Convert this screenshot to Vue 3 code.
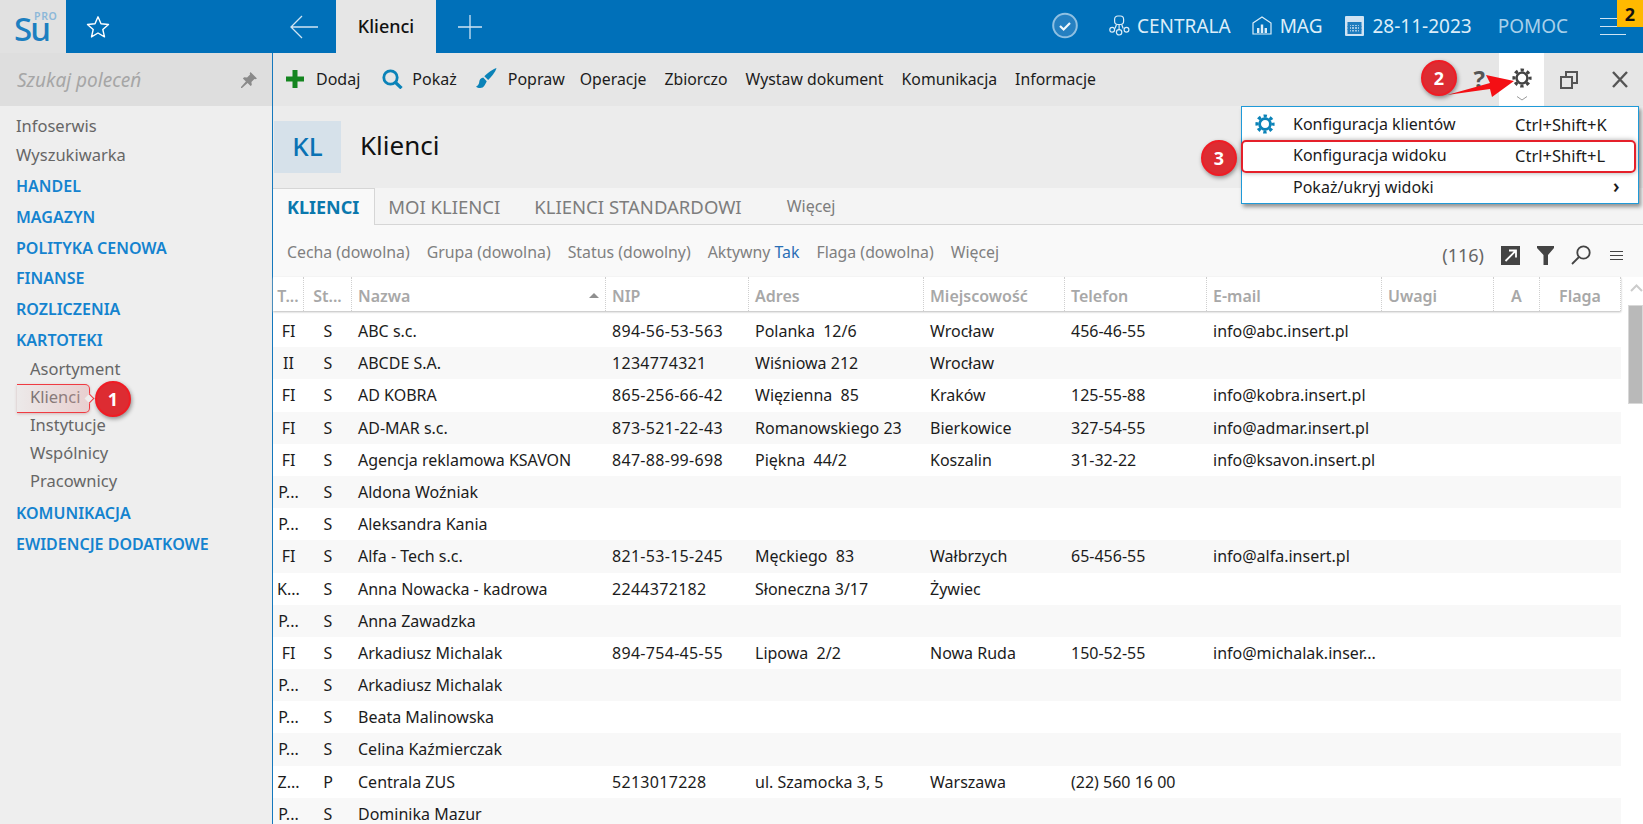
<script setup>
const navTop = ['Infoserwis', 'Wyszukiwarka']
const navA = ['HANDEL', 'MAGAZYN', 'POLITYKA CENOWA', 'FINANSE', 'ROZLICZENIA', 'KARTOTEKI']
const navSub = ['Asortyment', 'Klienci', 'Instytucje', 'Wspólnicy', 'Pracownicy']
const navB = ['KOMUNIKACJA', 'EWIDENCJE DODATKOWE']
const tools = ['Operacje', 'Zbiorczo', 'Wystaw dokument', 'Komunikacja', 'Informacje']
const headers = [
  ['T...', 'c'], ['St...', 'c'], ['Nazwa', 's'], ['NIP', ''], ['Adres', ''], ['Miejscowość', ''],
  ['Telefon', ''], ['E-mail', ''], ['Uwagi', ''], ['A', 'c'], ['Flaga', 'c']
]
const rows = [
  ['FI', 'S', 'ABC s.c.', '894-56-53-563', 'Polanka  12/6', 'Wrocław', '456-46-55', 'info@abc.insert.pl'],
  ['II', 'S', 'ABCDE S.A.', '1234774321', 'Wiśniowa 212', 'Wrocław', '', ''],
  ['FI', 'S', 'AD KOBRA', '865-256-66-42', 'Więzienna  85', 'Kraków', '125-55-88', 'info@kobra.insert.pl'],
  ['FI', 'S', 'AD-MAR s.c.', '873-521-22-43', 'Romanowskiego 23', 'Bierkowice', '327-54-55', 'info@admar.insert.pl'],
  ['FI', 'S', 'Agencja reklamowa KSAVON', '847-88-99-698', 'Piękna  44/2', 'Koszalin', '31-32-22', 'info@ksavon.insert.pl'],
  ['P...', 'S', 'Aldona Woźniak', '', '', '', '', ''],
  ['P...', 'S', 'Aleksandra Kania', '', '', '', '', ''],
  ['FI', 'S', 'Alfa - Tech s.c.', '821-53-15-245', 'Męckiego  83', 'Wałbrzych', '65-456-55', 'info@alfa.insert.pl'],
  ['K...', 'S', 'Anna Nowacka - kadrowa', '2244372182', 'Słoneczna 3/17', 'Żywiec', '', ''],
  ['P...', 'S', 'Anna Zawadzka', '', '', '', '', ''],
  ['FI', 'S', 'Arkadiusz Michalak', '894-754-45-55', 'Lipowa  2/2', 'Nowa Ruda', '150-52-55', 'info@michalak.inser...'],
  ['P...', 'S', 'Arkadiusz Michalak', '', '', '', '', ''],
  ['P...', 'S', 'Beata Malinowska', '', '', '', '', ''],
  ['P...', 'S', 'Celina Kaźmierczak', '', '', '', '', ''],
  ['Z...', 'P', 'Centrala ZUS', '5213017228', 'ul. Szamocka 3, 5', 'Warszawa', '(22) 560 16 00', ''],
  ['P...', 'S', 'Dominika Mazur', '', '', '', '', '']
]
</script>

<template>
  <div class="app">
    <header class="top">
      <div class="logo"><span class="su">Su</span><span class="pro">PRO</span></div>
      <svg class="star" width="24" height="24" viewBox="0 0 24 24"><path d="M12 1.800l3 7 7.500.7-5.700 5 1.700 7.400L12 18l-6.500 3.900 1.700-7.400-5.700-5 7.500-.7z" fill="none" stroke="#fff" stroke-width="1.400" stroke-linejoin="round"/></svg>
      <svg class="back" width="30" height="24" viewBox="0 0 30 24"><path d="M29 12H2M13 1L2 12l11 11" fill="none" stroke="#cfe4f3" stroke-width="1.300"/></svg>
      <div class="tab">Klienci</div>
      <svg class="plus" width="24" height="24" viewBox="0 0 24 24"><path d="M12 0v24M0 12h24" stroke="#cfe4f3" stroke-width="1.300"/></svg>
      <div class="status">
        <svg class="st-check" width="26" height="27" viewBox="0 0 26 27"><circle cx="13" cy="13.500" r="11.800" fill="#2580c1" stroke="#8fc0e2" stroke-width="2"/><path d="M8 14l3.600 3.500L18 11" fill="none" stroke="#f2f8fc" stroke-width="2.200"/></svg>
        <svg class="st-net" width="21" height="21" viewBox="0 0 21 21" fill="none" stroke="#dcedf8" stroke-width="1.200"><rect x="5.600" y="1" width="9" height="8.500" rx="3.200"/><path d="M10.100 9.500v5.400M7.500 9.500L6 13.500M12.700 9.500l1.500 4"/><circle cx="3.200" cy="14.800" r="2.400"/><circle cx="10.100" cy="17.300" r="2.700"/><circle cx="17.500" cy="14.800" r="2.400"/></svg>
        <span class="st-text cen">CENTRALA</span>
        <svg class="st-home" width="20" height="19" viewBox="0 0 20 19" fill="none" stroke="#dcedf8" stroke-width="1.200"><path d="M1 7l9-6 9 6v11H1z"/><path d="M5 12h2.400v5H5zM8.800 8.500h2.400V17H8.800zM12.600 12H15v5h-2.400z" fill="#dcedf8" stroke="none"/></svg>
        <span class="st-text mag">MAG</span>
        <svg class="st-cal" width="19" height="20" viewBox="0 0 19 20"><rect width="19" height="20" rx="1" fill="#cfe3f3"/><rect x="2.500" y="6" width="14" height="12" fill="#1f7dbf"/><path d="M5 9h9v6.500H5z" fill="#9cc6e4"/><path d="M2.500 10.500h14M2.500 13.500h14M6.500 6v12M9.500 6v12M12.500 6v12" stroke="#1f7dbf"/></svg>
        <span class="st-text date">28-11-2023</span>
        <span class="st-text help">POMOC</span>
      </div>
      <div class="burger"><i></i><i></i><i></i></div>
    </header>

    <div class="body">
      <aside class="side">
        <div class="search">
          <span>Szukaj poleceń</span>
          <svg width="18" height="18" viewBox="0 0 18 18"><path d="M10.500 1l6.500 6.500-1.600.8-1-.4-3 3 .4 3-1.200 1.200-3-3L2 17H1v-1l4.900-5.600-3-3 1.200-1.200 3 .4 3-3-.4-1z" fill="#8a8a8a"/></svg>
        </div>
        <nav class="nav">
          <a v-for="n in navTop" :key="n" class="plain">{{ n }}</a>
          <a v-for="n in navA" :key="n" class="group">{{ n }}</a>
          <a v-for="n in navSub" :key="n" class="sub">{{ n }}</a>
          <a v-for="n in navB" :key="n" class="group lower">{{ n }}</a>
        </nav>
      </aside>

      <main class="content">
        <div class="toolbar">
          <div class="tb-item add">
            <svg width="18" height="18" viewBox="0 0 18 18"><path d="M6.500 0h5v6.500H18v5h-6.500V18h-5v-6.500H0v-5h6.500z" fill="#14851f"/></svg>
            <span>Dodaj</span>
          </div>
          <div class="tb-item find">
            <svg width="21" height="20" viewBox="0 0 21 20" fill="none" stroke="#0b83b8"><circle cx="8.500" cy="8.500" r="6.700" stroke-width="2.800"/><path d="M13.500 13.500l6 5.700" stroke-width="3.200"/></svg>
            <span>Pokaż</span>
          </div>
          <div class="tb-item edit">
            <svg width="21" height="21" viewBox="0 0 21 21" fill="#0b83b8"><path d="M20.500 0c-1 4-5.500 9-8.300 12L8.300 8.300C11.500 5 17 1 20.500 0z"/><path d="M7.200 9.500c-3 .5-3.800 2.600-4 4.700-.2 2-1.700 3.800-3.200 4.300 2.500 2.300 7 2 8.500-1 1-2 2-3.500 2.200-4.300z"/></svg>
            <span>Popraw</span>
          </div>
          <span v-for="t in tools" :key="t" class="tb-text">{{ t }}</span>
          <div class="tb-right">
            <span class="q">?</span>
            <div class="gear-box">
              <svg width="20" height="20" viewBox="0 0 20 20" fill="none" stroke="#444"><circle cx="10" cy="10" r="5.400" stroke-width="2.400"/><circle cx="10" cy="10" r="8" stroke-width="3.200" stroke-dasharray="3.283 3" stroke-dashoffset="1.640"/></svg>
              <svg class="chev" width="12" height="5" viewBox="0 0 12 5"><path d="M1 .5l5 3.500 5-3.500" fill="none" stroke="#999"/></svg>
            </div>
            <svg class="restore" width="18" height="18" viewBox="0 0 18 18" fill="none" stroke="#555" stroke-width="2"><rect x="1" y="6" width="11" height="11"/><path d="M6 6V1h11v11h-5"/></svg>
            <svg class="close" width="16" height="17" viewBox="0 0 16 17"><path d="M1 1l14 15M15 1L1 16" stroke="#555" stroke-width="2.400"/></svg>
          </div>
        </div>

        <div class="title-row">
          <div class="kl">KL</div>
          <h1>Klienci</h1>
        </div>

        <div class="tabs">
          <span class="t active">KLIENCI</span>
          <span class="t">MOI KLIENCI</span>
          <span class="t">KLIENCI STANDARDOWI</span>
          <span class="t more">Więcej</span>
        </div>

        <div class="filters">
          <span>Cecha (dowolna)</span>
          <span>Grupa (dowolna)</span>
          <span>Status (dowolny)</span>
          <span>Aktywny <b>Tak</b></span>
          <span>Flaga (dowolna)</span>
          <span>Więcej</span>
          <div class="f-right">
            <span class="count">(116)</span>
            <svg width="19" height="19" viewBox="0 0 19 19"><rect width="19" height="19" fill="#444"/><path d="M8 4.500h7v7M15 4.500L4.500 15" fill="none" stroke="#fff" stroke-width="1.800"/></svg>
            <svg class="ic-f" width="17" height="19" viewBox="0 0 17 19"><path d="M0 0h17v2l-6 7v10H6.500V9L0 2z" fill="#444"/></svg>
            <svg class="ic-f" width="20" height="20" viewBox="0 0 20 20" fill="none" stroke="#444" stroke-width="1.800"><circle cx="12.500" cy="7.500" r="6.200"/><path d="M8 12l-7 7"/></svg>
            <svg class="ic-h" width="13" height="9" viewBox="0 0 13 9"><path d="M0 .5h13M0 4.500h13M0 8.500h13" stroke="#444"/></svg>
          </div>
        </div>

        <div class="table-wrap">
          <div class="table">
            <div class="row head">
              <div v-for="h in headers" :key="h[0]" class="cell" :class="{ center: h[1] === 'c' }">
                {{ h[0] }}<i v-if="h[1] === 's'" class="sort"></i>
              </div>
            </div>
            <div v-for="(r, i) in rows" :key="i" class="row" :class="{ alt: i % 2 === 1 }">
              <div v-for="(c, j) in r" :key="j" class="cell" :class="{ center: j < 2, num: j === 3 }">{{ c }}</div>
            </div>
          </div>
          <div class="scroll">
            <svg width="13" height="8" viewBox="0 0 13 8"><path d="M1 7l5.500-5.500L12 7" fill="none" stroke="#ccc" stroke-width="2"/></svg>
            <div class="thumb"></div>
          </div>
        </div>
      </main>
    </div>

    <div class="yellow">2</div>

    <div class="menu">
      <div class="mi one">
        <svg width="20" height="20" viewBox="0 0 20 20" fill="none" stroke="#0b83b8"><circle cx="10" cy="10" r="5.400" stroke-width="2.800"/><circle cx="10" cy="10" r="8" stroke-width="3.200" stroke-dasharray="3.283 3" stroke-dashoffset="1.640"/></svg>
        <span class="ml">Konfiguracja klientów</span><span class="ms">Ctrl+Shift+K</span>
      </div>
      <div class="mi">
        <span class="ml">Konfiguracja widoku</span><span class="ms">Ctrl+Shift+L</span>
      </div>
      <div class="mi">
        <span class="ml">Pokaż/ukryj widoki</span><span class="mc">›</span>
      </div>
    </div>

    <div class="red-box"></div>
    <div class="callout"></div>
    <div class="badge b1">1</div>
    <svg class="arrow" width="70" height="24" viewBox="0 0 70 24"><path d="M1 21L44 9 40 1l28 6-22 16-2-8z" fill="#f40f14"/></svg>
    <div class="badge b2">2</div>
    <div class="badge b3">3</div>
  </div>
</template>

<style>
html, body { margin: 0; padding: 0; overflow: hidden; }
</style>

<style scoped>
.app {
  position: relative;
  width: 1643px;
  height: 824px;
  overflow: hidden;
  display: flex;
  flex-direction: column;
  font-family: "Noto Sans", "Open Sans", sans-serif;
  font-size: 16px;
  color: #1c1c1c;
  background: #fff;
}
.top {
  flex: 0 0 53px;
  display: flex;
  align-items: center;
  background: #0070b9;
}
.logo {
  width: 66px;
  height: 53px;
  background: #e1e1e1;
  position: relative;
  flex: none;
}
.su {
  position: absolute;
  left: 14px;
  top: 21px;
  font-size: 33px;
  line-height: 16px;
  letter-spacing: -2px;
  color: #1c7fc0;
  font-weight: 500;
}
.pro {
  position: absolute;
  left: 34px;
  top: 13px;
  font-size: 10.500px;
  line-height: 7px;
  letter-spacing: 0.7px;
  color: #8cb8d9;
  font-weight: 600;
}
.star { margin-left: 20px; flex: none; }
.back { margin-left: 179px; flex: none; }
.tab {
  margin-left: 17px;
  width: 100px;
  height: 53px;
  flex: none;
  background: #e6e6e6;
  text-align: center;
  line-height: 53px;
  font-size: 18px;
  font-weight: 500;
  color: #111;
}
.plus { margin-left: 22px; flex: none; }
.status {
  flex: 1;
  display: flex;
  align-items: center;
  padding-bottom: 2px;
  color: #dcedf8;
}
.st-check { margin-left: 570px; }
.st-net { margin-left: 31px; }
.st-text { font-size: 19px; white-space: nowrap; line-height: 24px; }
.cen { margin-left: 7px; }
.st-home { margin-left: 21px; }
.mag { margin-left: 8px; }
.st-cal { margin-left: 23px; }
.date { margin-left: 8px; }
.help { margin-left: 26px; color: #a9d0ea; }
.burger {
  position: absolute;
  left: 1600px;
  top: 18px;
  width: 26px;
  display: flex;
  flex-direction: column;
  gap: 7px;
}
.burger i { display: block; height: 1px; background: #cfe4f3; }
.yellow {
  position: absolute;
  left: 1617px;
  top: 0;
  width: 26px;
  height: 27px;
  background: #ffb900;
  text-align: center;
  line-height: 28px;
  font-weight: 700;
  font-size: 18px;
  color: #111;
}
.body { flex: 1; display: flex; min-height: 0; }
.side {
  width: 272px;
  flex: none;
  background: #eeeeee;
  border-right: 1px solid #1578bd;
}
.search {
  height: 53px;
  background: #dedede;
  display: flex;
  align-items: center;
  justify-content: space-between;
  padding: 0 14px 0 17px;
  font-style: italic;
  font-size: 19px;
  color: #a6a6a6;
}
.nav { display: flex; flex-direction: column; padding-top: 5px; }
.nav a { display: block; padding-left: 16px; }
.plain { height: 29.500px; line-height: 30px; font-size: 16.500px; color: #666; }
.plain + .plain { line-height: 28px; }
.group { height: 30.800px; line-height: 33px; font-weight: 600; color: #1483cf; }
.sub { height: 28px; line-height: 28px; font-size: 16.500px; color: #666; padding-left: 30px !important; }
.lower { position: relative; top: 2px; }
.content { flex: 1; min-width: 0; display: flex; flex-direction: column; background: #ececec; }
.toolbar {
  flex: 0 0 53px;
  min-height: 0;
  box-sizing: border-box;
  padding-bottom: 2px;
  background: #e6e6e6;
  display: flex;
  align-items: center;
}
.tb-item { display: flex; align-items: center; gap: 11px; margin-right: 18px; }
.tb-item.add { margin-left: 13px; margin-right: 22px; gap: 12px; }
.tb-item.find { gap: 9px; margin-right: 19px; }
.tb-item.edit { margin-right: 15px; }
.tb-text { margin-right: 18px; white-space: nowrap; font-size: 15.800px; }
.tb-right { margin-left: auto; display: flex; align-items: center; height: 53px; align-self: flex-start; margin-bottom: -2px; }
.q { font-size: 24px; font-weight: 700; color: #555; margin-right: 14px; padding-bottom: 3px; }
.gear-box {
  width: 45px;
  height: 53px;
  background: #fff;
  position: relative;
  display: flex;
  align-items: center;
  justify-content: center;
  padding-bottom: 3px;
  box-sizing: border-box;
}
.chev { position: absolute; left: 17px; top: 43px; }
.restore { margin-left: 16px; }
.close { margin-left: 34px; margin-right: 15px; }
.title-row {
  flex: 0 0 82px;
  display: flex;
  align-items: flex-start;
}
.kl {
  margin: 15px 0 0 1px;
  width: 67px;
  height: 52px;
  background: #d6e1ea;
  color: #0a72b4;
  text-align: center;
  line-height: 50px;
  font-size: 26px;
  font-weight: 500;
}
h1 {
  margin: 13px 0 0 19px;
  font-size: 26px;
  font-weight: 400;
  line-height: 53px;
  color: #111;
}
.tabs {
  flex: 0 0 37px;
  display: flex;
  align-items: stretch;
  border-bottom: 1px solid #d6d6d6;
  box-sizing: border-box;
  background: #f4f4f4;
  font-size: 18.500px;
  color: #7d7d7d;
}
.t { display: flex; align-items: center; padding: 0 21px 0 13px; white-space: nowrap; }
.t.active {
  color: #0a78ad;
  font-weight: 700;
  background: #f9f9f9;
  border: 1px solid #d6d6d6;
  border-bottom: 0;
  border-left: 0;
  margin-bottom: -1px;
  padding: 0 15px 0 14px;
  font-size: 18px;
}
.t.more { font-size: 16px; margin-left: 11px; }
.filters {
  flex: 0 0 52px;
  box-sizing: border-box;
  padding: 2px 0 0 14px;
  display: flex;
  align-items: center;
  gap: 17px;
  background: #f9f9f9;
  color: #808080;
  font-size: 15.850px;
  white-space: nowrap;
}
.filters b { font-weight: 400; color: #2a6fb5; }
.f-right { margin-left: auto; margin-top: 6px; display: flex; align-items: center; padding-right: 20px; }
.count { font-size: 18px; color: #666; margin-right: 17px; }
.ic-f { margin-left: 17px; }
.ic-h { margin-left: 19px; }
.table-wrap { flex: 1; min-height: 0; display: flex; background: #fff; }
.table { width: 1348px; flex: none; }
.row {
  display: grid;
  grid-template-columns: 31px 48px 254px 143px 175px 141px 142px 175px 112px 46px 81px;
  height: 32.200px;
  background: #fff;
}
.row.alt { background: #f8f8f8; }
.row.head {
  height: 34px;
  margin-bottom: 4px;
  color: #a8a8a8;
  font-weight: 600;
  box-shadow: 0 1px 2px #bbb;
  position: relative;
}
.cell {
  position: relative;
  padding: 0 6px;
  line-height: 32px;
  white-space: pre;
  overflow: hidden;
}
.cell.num { letter-spacing: 0.3px; }
.head .cell { border-right: 1px dotted #cfcfcf; line-height: 38px; }
.cell.center { text-align: center; padding: 0; }
.sort {
  position: absolute;
  right: 6px;
  top: 16px;
  width: 0;
  height: 0;
  border: 5px solid transparent;
  border-top: 0;
  border-bottom: 5px solid #8f8f8f;
}
.scroll { flex: 1; padding-left: 7px; position: relative; }
.scroll svg { position: absolute; left: 9px; top: 7px; }
.thumb {
  margin-top: 28px;
  width: 13px;
  height: 97px;
  background: #b9b9b9;
  border: 1px solid #d8d8d8;
}
.menu {
  position: absolute;
  left: 1241px;
  top: 106px;
  width: 396px;
  height: 96px;
  background: #fff;
  border: 1px solid #1f9ad8;
  box-shadow: 2px 3px 4px rgba(0, 0, 0, 0.4);
}
.mi {
  position: relative;
  height: 32px;
  line-height: 33px;
  color: #1b1b1b;
}
.mi.one { line-height: 35px; }
.mi svg { position: absolute; left: 13px; top: 7px; }
.ml { position: absolute; left: 51px; white-space: nowrap; }
.ms { position: absolute; left: 273px; white-space: nowrap; font-size: 16.500px; }
.mc { position: absolute; left: 371px; font-size: 19px; font-weight: 600; top: -1px; }
.red-box {
  position: absolute;
  left: 1241px;
  top: 140px;
  width: 391px;
  height: 29px;
  border: 2px solid #e5202a;
  border-radius: 5px;
  box-shadow: 0 0 5px rgba(0, 0, 0, 0.35);
}
.callout {
  position: absolute;
  left: 17px;
  top: 384px;
  width: 72px;
  height: 27px;
  border: 1.500px solid #ef3b42;
  border-left: 0;
  border-radius: 0 5px 5px 0;
  background: linear-gradient(90deg, rgba(220, 190, 190, 0.1), rgba(225, 170, 170, 0.45));
  box-shadow: 0 1px 3px rgba(150, 60, 60, 0.3);
}
.callout::after {
  content: "";
  position: absolute;
  right: -4px;
  top: 10px;
  width: 6px;
  height: 6px;
  transform: rotate(45deg);
  border-top: 1.500px solid #ef3b42;
  border-right: 1.500px solid #ef3b42;
  background: #eee;
}
.badge {
  position: absolute;
  width: 32px;
  height: 32px;
  border-radius: 50%;
  background: #dd2c32;
  border: 2px solid #f01c24;
  box-shadow: 1px 2px 4px rgba(0, 0, 0, 0.4);
  color: #fff;
  font-size: 18px;
  font-weight: 700;
  line-height: 32px;
  text-align: center;
}
.b1 { left: 95px; top: 381px; }
.b2 { left: 1421px; top: 60px; }
.b3 { left: 1201px; top: 140px; }
.arrow { position: absolute; left: 1446px; top: 74px; }
</style>
